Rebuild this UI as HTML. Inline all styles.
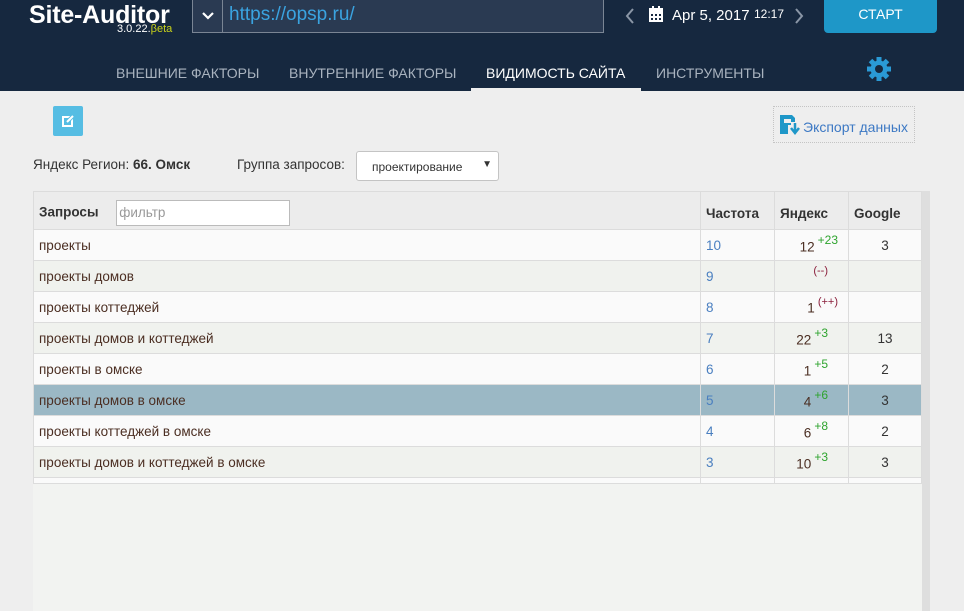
<!DOCTYPE html>
<html><head><meta charset="utf-8"><style>
*{margin:0;padding:0;box-sizing:border-box}
body{width:964px;height:611px;overflow:hidden;background:#eeeeee;font-family:"Liberation Sans",sans-serif;position:relative}
.hdr{position:absolute;left:0;top:0;width:964px;height:91px;background:#16283f}
.abs{position:absolute}
.logo{left:29px;top:1px;color:#fff;font-weight:bold;font-size:25px;letter-spacing:-0.2px}
.ver{left:117px;top:23px;color:#fff;font-size:11px}
.ver span{color:#c8d21a}
.url{left:192px;top:0;width:412px;height:33px;border:1px solid #7a8594;border-top:none;background:#2a3a52}
.url .dd{position:absolute;left:0;top:0;width:30px;height:32px;border-right:1px solid #7a8594}
.url .t{position:absolute;left:36px;top:4px;color:#3aa3e0;font-size:19px}
.nav{top:65px;font-size:14px;color:#a9b3bf}
.start{left:824px;top:0;width:113px;height:33px;background:#1e97c8;border-radius:0 0 4px 4px;color:#fff;font-size:14px;text-align:center;line-height:29px}
table{border-collapse:collapse;position:absolute;left:33px;top:191px;width:889px}
td{border:1px solid #dcdcdc;height:31px;font-size:13.5px;padding:0 5px;vertical-align:middle}
tr.h td{height:38px;background:#ececec;font-weight:bold;color:#333;padding-top:5px}
td.q{color:#4b2e22;width:667px}
td.f{color:#4a7fc0;width:74px}
td.y{text-align:right;color:#4b2e22;width:74px;padding-right:10px}
td.g{text-align:center;color:#333}
sup{font-size:12px;color:#2ea42e;position:relative;top:-2px;margin-left:3px}
sup.r{color:#8a1e3a;font-size:11px}
tr.o td{background:#fafafa}
tr.e td{background:#f0f2ee}
tr.s td{background:#9bb8c5}
</style></head><body>
<div class="hdr"></div>
<div class="abs logo">Site-Auditor</div>
<div class="abs ver">3.0.22.<span>βeta</span></div>
<div class="abs url"><div class="dd"><svg width="30" height="32"><path d="M10 13l5 5 5-5" stroke="#fff" stroke-width="2.2" fill="none"/></svg></div><div class="t">https://opsp.ru/</div></div>
<svg class="abs" style="left:624px;top:7px" width="12" height="18"><path d="M9 2L3 9l6 7" stroke="#8a96a6" stroke-width="2" fill="none"/></svg>
<svg class="abs" style="left:648px;top:6px" width="16" height="17"><rect x="1" y="2" width="14" height="14" fill="#fff"/><rect x="4" y="0" width="2" height="4" fill="#fff"/><rect x="10" y="0" width="2" height="4" fill="#fff"/><g fill="#16283f"><rect x="3" y="8" width="2" height="2"/><rect x="7" y="8" width="2" height="2"/><rect x="11" y="8" width="2" height="2"/><rect x="3" y="12" width="2" height="2"/><rect x="7" y="12" width="2" height="2"/><rect x="11" y="12" width="2" height="2"/></g></svg>
<div class="abs" style="left:672px;top:7px;color:#fff;font-size:15px">Apr 5, 2017</div>
<div class="abs" style="left:754px;top:7px;color:#fff;font-size:12px">12:17</div>
<svg class="abs" style="left:793px;top:7px" width="12" height="18"><path d="M3 2l6 7-6 7" stroke="#8a96a6" stroke-width="2" fill="none"/></svg>
<div class="abs start">СТАРТ</div>
<div class="abs nav" style="left:116px">ВНЕШНИЕ ФАКТОРЫ</div>
<div class="abs nav" style="left:289px">ВНУТРЕННИЕ ФАКТОРЫ</div>
<div class="abs nav" style="left:486px;color:#fff">ВИДИМОСТЬ САЙТА</div>
<div class="abs nav" style="left:656px">ИНСТРУМЕНТЫ</div>
<div class="abs" style="left:471px;top:88px;width:170px;height:3px;background:#eeeeee"></div>
<svg class="abs" style="left:866px;top:56px" width="26" height="26" viewBox="0 0 26 26"><g fill="#2a9ad6"><circle cx="13" cy="13" r="8.5"/><rect x="10.5" y="1" width="5" height="24"/><rect x="10.5" y="1" width="5" height="24" transform="rotate(45 13 13)"/><rect x="10.5" y="1" width="5" height="24" transform="rotate(90 13 13)"/><rect x="10.5" y="1" width="5" height="24" transform="rotate(135 13 13)"/></g><circle cx="13" cy="13" r="4" fill="#16283f"/></svg>
<div class="abs" style="left:53px;top:106px;width:30px;height:30px;background:#56bde3;border-radius:2px"><svg width="30" height="30"><rect x="10" y="11" width="9" height="9" fill="none" stroke="#fff" stroke-width="2"/><path d="M14 16l6-6" stroke="#56bde3" stroke-width="4"/><path d="M14 16l6-6" stroke="#fff" stroke-width="2"/></svg></div>
<div class="abs" style="left:773px;top:106px;width:142px;height:37px;border:1px dotted #c4c4c4"></div>
<svg class="abs" style="left:779px;top:114px" width="22" height="22"><path d="M1 1h12l3 3v4h-4v-3h-7v4h7v2h-3v9H1z" fill="#1e97c8"/><path d="M16 9v9M12 14l4 5 4-5" stroke="#1e97c8" stroke-width="2.5" fill="none"/></svg>
<div class="abs" style="left:803px;top:119px;color:#3d79c4;font-size:14px">Экспорт данных</div>
<div class="abs" style="left:33px;top:157px;color:#333;font-size:13.5px">Яндекс Регион: <b>66. Омск</b></div>
<div class="abs" style="left:237px;top:157px;color:#333;font-size:13.5px">Группа запросов:</div>
<div class="abs" style="left:356px;top:151px;width:143px;height:30px;background:#fff;border:1px solid #c4c4c4;border-radius:3px;font-size:12px;color:#333;padding:8px 0 0 15px">проектирование<span style="position:absolute;right:6px;top:7px;font-size:10px">▼</span></div>
<div class="abs" style="left:33px;top:483px;width:889px;height:128px;background:#f2f3f1"></div>
<div class="abs" style="left:922px;top:191px;width:8px;height:420px;background:#dedede"></div>
<table>
<tr class="h"><td class="q">Запросы <span style="display:inline-block;vertical-align:middle;margin-left:14px;width:174px;height:26px;background:#fff;border:1px solid #bbb;font-weight:normal;color:#999;padding:4px 2px;font-size:13.5px">фильтр</span></td><td style="color:#333">Частота</td><td style="color:#333">Яндекс</td><td>Google</td></tr>
<tr class="o"><td class="q">проекты</td><td class="f">10</td><td class="y">12<sup>+23</sup></td><td class="g">3</td></tr>
<tr class="e"><td class="q">проекты домов</td><td class="f">9</td><td class="y" style="padding-right:20px"><sup class="r">(--)</sup></td><td class="g"></td></tr>
<tr class="o"><td class="q">проекты коттеджей</td><td class="f">8</td><td class="y">1<sup class="r">(++)</sup></td><td class="g"></td></tr>
<tr class="e"><td class="q">проекты домов и коттеджей</td><td class="f">7</td><td class="y" style="padding-right:20px">22<sup>+3</sup></td><td class="g">13</td></tr>
<tr class="o"><td class="q">проекты в омске</td><td class="f">6</td><td class="y" style="padding-right:20px">1<sup>+5</sup></td><td class="g">2</td></tr>
<tr class="s"><td class="q">проекты домов в омске</td><td class="f">5</td><td class="y" style="padding-right:20px">4<sup>+6</sup></td><td class="g">3</td></tr>
<tr class="o"><td class="q">проекты коттеджей в омске</td><td class="f">4</td><td class="y" style="padding-right:20px">6<sup>+8</sup></td><td class="g">2</td></tr>
<tr class="e"><td class="q">проекты домов и коттеджей в омске</td><td class="f">3</td><td class="y" style="padding-right:20px">10<sup>+3</sup></td><td class="g">3</td></tr>
<tr class="o"><td class="q" style="height:6px"></td><td style="height:6px"></td><td style="height:6px"></td><td style="height:6px"></td></tr>
</table>
</body></html>
